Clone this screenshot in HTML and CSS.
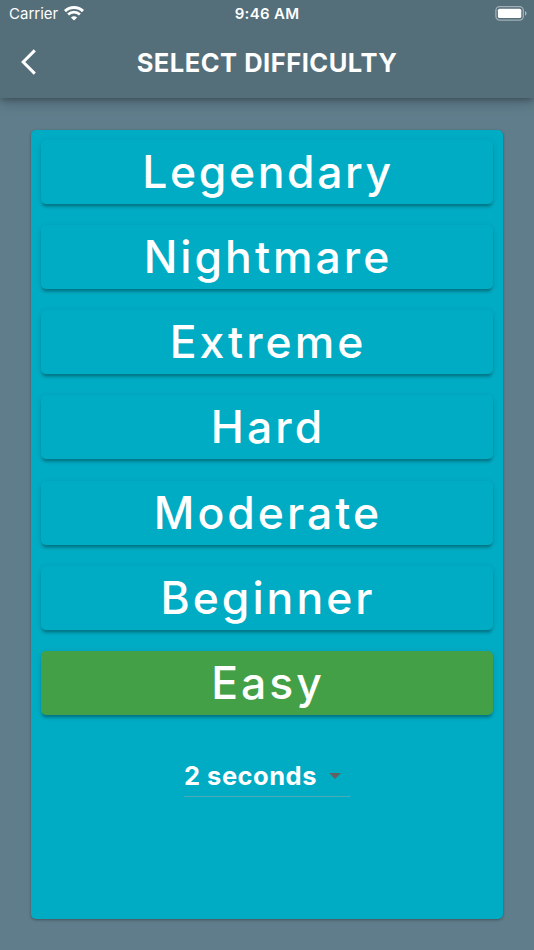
FILE: index.html
```html
<!DOCTYPE html>
<html lang="en">
<head>
  <meta charset="UTF-8" />
  <meta name="viewport" content="width=device-width, initial-scale=1.0"/>
  <title>Select Difficulty</title>
  <link rel="stylesheet" href="styles.css">
</head>
<body>

  <header class="header">
    <div class="status-bar">
      <div class="carrier">
        <span>Carrier</span>
        <svg class="wifi" width="20" height="15" viewBox="0 0 20 15">
          <path d="M1 5.1C6 .3 14 .3 19 5.1" fill="none" stroke="#fff" stroke-width="2.9"/>
          <path d="M4.1 8.5C7.4 5.4 12.6 5.4 15.9 8.5" fill="none" stroke="#fff" stroke-width="2.7"/>
          <path d="M6.9 11.4C8.7 9.8 11.3 9.8 13.1 11.4L10 14.5Z" fill="#fff"/>
        </svg>
      </div>
      <div class="time">9:46 AM</div>
      <div class="battery">
        <svg width="32" height="16" viewBox="0 0 32 16">
          <rect x=".9" y=".7" width="27.4" height="13.4" rx="3.8" fill="none" stroke="#fff" stroke-opacity=".45" stroke-width="1.3"/>
          <rect x="2.9" y="2.7" width="23.4" height="9.4" rx="1.6" fill="#fff"/>
          <path d="M30 5.1C32 5.9 32 8.9 30 9.7Z" fill="#fff" fill-opacity=".5"/>
        </svg>
      </div>
    </div>
    <div class="toolbar">
      <button class="back" aria-label="Back">
        <svg width="16" height="26" viewBox="0 0 16 26">
          <path d="M13.8 1.4L2.2 13L13.8 24.6" fill="none" stroke="#fff" stroke-width="3"/>
        </svg>
      </button>
      <h1 class="title">SELECT DIFFICULTY</h1>
    </div>
  </header>

  <main class="card">
    <div class="levels">
      <button class="level legendary">Legendary</button>
      <button class="level">Nightmare</button>
      <button class="level">Extreme</button>
      <button class="level">Hard</button>
      <button class="level">Moderate</button>
      <button class="level">Beginner</button>
      <button class="level selected">Easy</button>
    </div>
    <button class="dropdown">
      <span>2 seconds</span>
      <span class="arrow"></span>
    </button>
  </main>

</body>
</html>
```
FILE: styles.css
```css
* {
  margin: 0;
  padding: 0;
  box-sizing: border-box;
  font-family: Inter, 'Liberation Sans', sans-serif;
}

body {
  background-color: #607d8b;
  height: 950px;
  display: flex;
  flex-direction: column;
  color: white;
  overflow: hidden;
}

button {
  border: none;
  background: none;
  color: white;
  cursor: pointer;
}

svg {
  display: block;
}

.header {
  height: 98px;
  background-color: #546e7a;
  box-shadow: 0 3px 5px -1px rgba(0, 0, 0, 0.2), 0 5px 13px rgba(0, 0, 0, 0.14), 0 1px 13px rgba(0, 0, 0, 0.12);
}

.status-bar {
  display: grid;
  grid-template-columns: 1fr auto 1fr;
  height: 27px;
  padding: 0 7px 0 9px;
  align-items: center;
  font-size: 15px;
}

.carrier {
  display: flex;
  align-items: center;
  gap: 6px;
}

.wifi {
  margin-top: -1px;
}

.time {
  font-weight: 600;
  letter-spacing: 0.3px;
  padding-right: 2px;
}

.battery {
  justify-self: end;
}

.toolbar {
  display: grid;
  grid-template-columns: 60px 1fr 60px;
  height: 70px;
  align-items: center;
}

.back {
  padding-left: 21px;
}

.title {
  font-size: 25.5px;
  font-weight: 650;
  letter-spacing: 0.5px;
  text-align: center;
  white-space: nowrap;
}

.card {
  width: 472px;
  height: 789px;
  margin: 32px auto 0;
  padding: 10px;
  border-radius: 5px;
  background-color: #00acc4;
  box-shadow: 0 1px 3px rgba(0, 0, 0, 0.35);
  display: flex;
  flex-direction: column;
  align-items: center;
}

.levels {
  width: 100%;
  display: flex;
  flex-direction: column;
  gap: 21.15px;
}

.level {
  height: 64px;
  padding-left: 2px;
  border-radius: 5px;
  background-color: #00acc4;
  box-shadow: 0 4px 3px -2px rgba(0, 0, 0, 0.18), 0 3px 3px rgba(0, 0, 0, 0.12), 0 1px 6px rgba(0, 0, 0, 0.1);
  font-size: 44.5px;
  font-weight: 480;
  line-height: 62px;
  letter-spacing: 3px;
}

.level.legendary {
  letter-spacing: 2.6px;
}

.level.selected {
  background-color: #43a047;
}

.dropdown {
  display: flex;
  align-items: center;
  width: 166px;
  height: 42px;
  margin-top: 40px;
  border-bottom: 1px solid #4aabb5;
  font-size: 25.5px;
  font-weight: 650;
  letter-spacing: 0.5px;
}

.arrow {
  margin-top: 1px;
  margin-left: 12px;
  border: 6.5px solid transparent;
  border-top-color: #616161;
  border-bottom: none;
}
```
